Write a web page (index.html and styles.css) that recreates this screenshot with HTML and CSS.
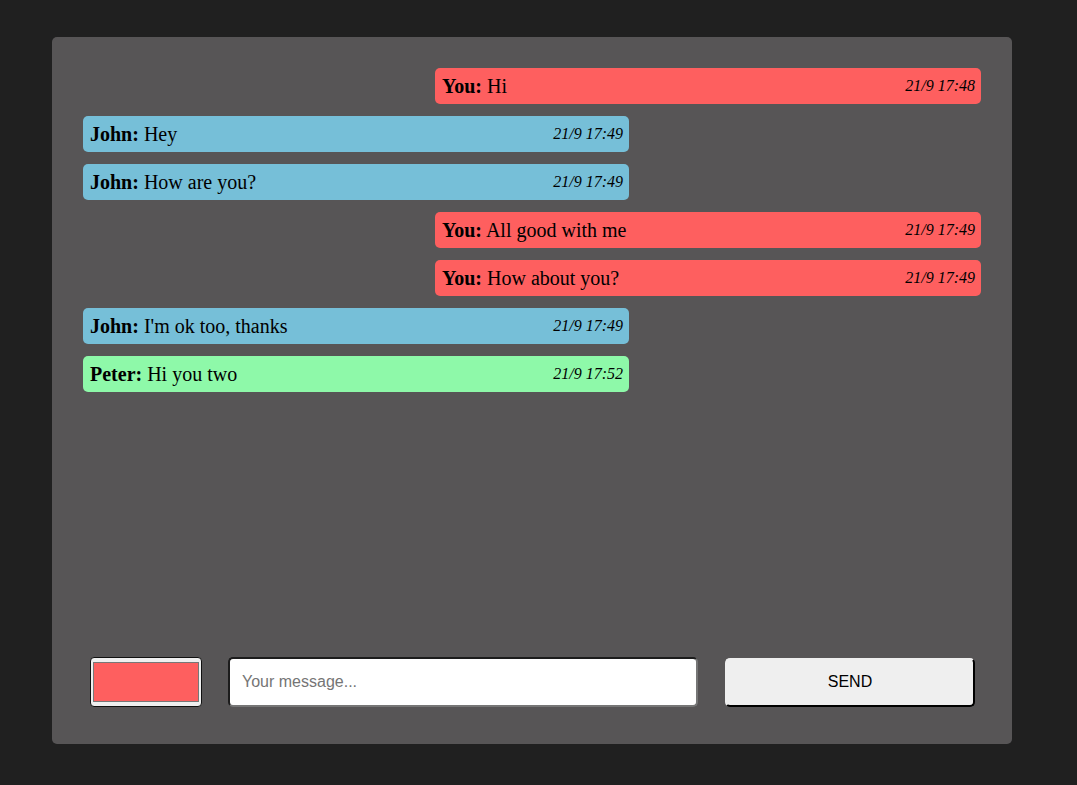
FILE: index.html
```html
<!DOCTYPE html>
<html>
<head>
<meta charset="utf-8">
<link rel="stylesheet" href="styles.css">
</head>
<body>
<div class="panel">
  <div class="messages">
    <div class="msg mine"><span class="text"><b>You:</b> Hi</span><i class="time">21/9 17:48</i></div>
    <div class="msg john"><span class="text"><b>John:</b> Hey</span><i class="time">21/9 17:49</i></div>
    <div class="msg john"><span class="text"><b>John:</b> How are you?</span><i class="time">21/9 17:49</i></div>
    <div class="msg mine"><span class="text"><b>You:</b> All good with me</span><i class="time">21/9 17:49</i></div>
    <div class="msg mine"><span class="text"><b>You:</b> How about you?</span><i class="time">21/9 17:49</i></div>
    <div class="msg john"><span class="text"><b>John:</b> I'm ok too, thanks</span><i class="time">21/9 17:49</i></div>
    <div class="msg peter"><span class="text"><b>Peter:</b> Hi you two</span><i class="time">21/9 17:52</i></div>
  </div>
  <form class="composer">
    <button type="button" class="color-pick"><span class="swatch"></span></button>
    <input class="message-input" type="text" placeholder="Your message...">
    <button type="button" class="send">SEND</button>
  </form>
</div>
</body>
</html>
```
FILE: styles.css
```css
html, body {
  margin: 0;
  padding: 0;
  background: #202020;
  height: 100%;
}
body {
  padding: 37px 0 0 52px;
  box-sizing: border-box;
}
.panel {
  width: 960px;
  height: 707px;
  background: #575556;
  border-radius: 5px;
  box-sizing: border-box;
  padding: 31px 31px 37px 31px;
  display: flex;
  flex-direction: column;
}
.messages {
  flex: 1;
  display: flex;
  flex-direction: column;
  gap: 12px;
}
.msg {
  width: 546px;
  height: 36px;
  box-sizing: border-box;
  border-radius: 5px;
  padding: 0 6px 0 7px;
  display: flex;
  align-items: center;
  justify-content: space-between;
  font-family: "Liberation Serif", "Times New Roman", serif;
  font-size: 20px;
  color: #000;
}
.msg .text {
  padding-top: 1px;
}
.msg .time {
  font-size: 16px;
  font-style: italic;
  padding-bottom: 1px;
}
.mine {
  align-self: flex-end;
  background: #fe5f5f;
}
.john {
  background: #76bfd8;
}
.peter {
  background: #8ef9a9;
}
.composer {
  margin: 0;
  display: flex;
  align-items: center;
  gap: 26px;
  padding: 0 6px 0 7px;
  height: 50px;
}
.color-pick {
  width: 112px;
  height: 50px;
  box-sizing: border-box;
  border: 1px solid #111;
  border-radius: 4px;
  background: #efefef;
  padding: 4px 2px;
  margin: 0;
  display: flex;
}
.swatch {
  flex: 1;
  background: #fe5f5f;
  border: 1px solid #777;
}
.message-input {
  flex: 1;
  height: 50px;
  box-sizing: border-box;
  margin: 0;
  border: 2px solid;
  border-color: #1c1c1c #767676 #767676 #1c1c1c;
  border-radius: 5px;
  background: #fff;
  padding: 0 12px;
  font-family: "Liberation Sans", Arial, sans-serif;
  font-size: 16px;
  outline: none;
}
.message-input::placeholder {
  color: #757575;
}
.send {
  width: 250px;
  height: 49px;
  margin: 1px 0 0 1px;
  box-sizing: border-box;
  border: 2px solid;
  border-color: #efefef #000 #000 #efefef;
  border-radius: 5px;
  background: #efefef;
  font-family: "Liberation Sans", Arial, sans-serif;
  font-size: 16px;
  color: #000;
  padding-bottom: 2px;
}
```
